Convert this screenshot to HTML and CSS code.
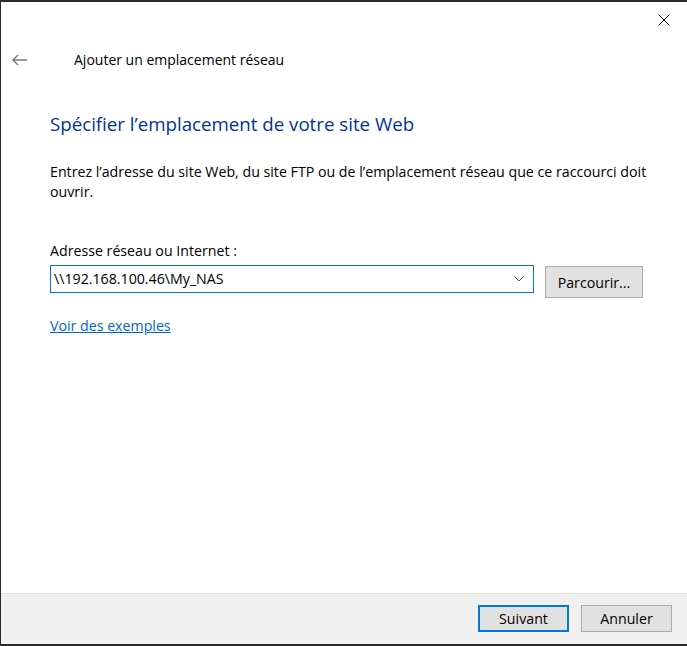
FILE: index.html
```html
<!DOCTYPE html>
<html lang="fr">
<head>
<meta charset="utf-8">
<title>Ajouter un emplacement réseau</title>
<link rel="stylesheet" href="styles.css">
</head>
<body>
<div class="window">
  <div class="caption">
    <button class="close" aria-label="Fermer">
      <svg width="12" height="12" viewBox="0 0 12 12"><path d="M0.5 0.5 L11.5 11.5 M11.5 0.5 L0.5 11.5" stroke="#000" stroke-width="1" fill="none"/></svg>
    </button>
  </div>
  <div class="header">
    <span class="back">
      <svg width="16" height="12" viewBox="0 0 16 12"><path d="M1 6 H15 M6 1 L1 6 L6 11" stroke="#767676" stroke-width="1.4" fill="none"/></svg>
    </span>
    <span class="title">Ajouter un emplacement réseau</span>
  </div>
  <div class="content">
    <h1 class="main">Spécifier l’emplacement de votre site Web</h1>
    <p class="desc">Entrez l’adresse du site Web, du site FTP ou de l’emplacement réseau que ce raccourci doit<br>ouvrir.</p>
    <div class="label">Adresse réseau ou Internet :</div>
    <div class="row">
      <div class="combo">
        <span class="value">\\192.168.100.46\My_NAS</span>
        <svg class="chev" width="10" height="6" viewBox="0 0 10 6"><path d="M0.5 0.5 L5 5 L9.5 0.5" stroke="#555" stroke-width="1" fill="none"/></svg>
      </div>
      <button class="btn browse">Parcourir...</button>
    </div>
    <a class="link" href="#">Voir des exemples</a>
  </div>
  <div class="footer">
    <button class="btn primary">Suivant</button>
    <button class="btn">Annuler</button>
  </div>
</div>
</body>
</html>
```
FILE: styles.css
```css
* { box-sizing: border-box; }
html, body { margin: 0; padding: 0; }
body {
  width: 687px;
  height: 646px;
  overflow: hidden;
  background: #fff;
  font-family: "Open Sans", "Noto Sans", sans-serif;
  font-size: 14.2px;
  color: #000;
}
.window {
  width: 687px;
  height: 646px;
  border-top: 2px solid #2b2b2b;
  border-left: 1px solid #2b2b2b;
  border-bottom: 2px solid #2b2b2b;
  display: flex;
  flex-direction: column;
  background: #fff;
}
.caption {
  height: 38px;
  display: flex;
  justify-content: flex-end;
}
.close {
  width: 46px;
  height: 36px;
  border: 0;
  background: transparent;
  padding: 0;
  display: flex;
  align-items: center;
  justify-content: center;
}
.header {
  height: 40px;
  display: flex;
  align-items: center;
}
.back {
  width: 73px;
  padding-left: 11px;
  display: flex;
  align-items: center;
}
.title {
  font-size: 14px;
  line-height: 20px;
  color: #000;
}
.content {
  flex: 1;
  padding-left: 49px;
  display: flex;
  flex-direction: column;
  align-items: flex-start;
}
.main {
  margin: 30px 0 0;
  font-size: 18.7px;
  font-weight: normal;
  line-height: 28px;
  color: #003399;
}
.desc {
  margin: 24px 0 0;
  line-height: 20px;
}
.label {
  margin-top: 39px;
  line-height: 20px;
}
.row {
  margin-top: 4px;
  display: flex;
  align-items: flex-start;
}
.combo {
  width: 484px;
  height: 28px;
  border: 1px solid #0078d7;
  display: flex;
  align-items: center;
  justify-content: space-between;
  padding: 0 9px 0 3px;
}
.value { line-height: 20px; }
.btn {
  font-family: inherit;
  font-size: 14.2px;
  color: #000;
  background: #e1e1e1;
  border: 1px solid #adadad;
  padding: 0;
  height: 27px;
  width: 91px;
}
.browse {
  margin-left: 11px;
  margin-top: 1px;
  width: 98px;
  height: 32px;
}
.link {
  margin-top: 18px;
  color: #0066cc;
  line-height: 20px;
  text-decoration: underline;
}
.footer {
  height: 51px;
  border-top: 1px solid #dfdfdf;
  background: #f0f0f0;
  display: flex;
  justify-content: flex-end;
  align-items: flex-start;
  gap: 12px;
  padding: 11px 15px 0 0;
}
.primary {
  border: 2px solid #0078d7;
}
```
